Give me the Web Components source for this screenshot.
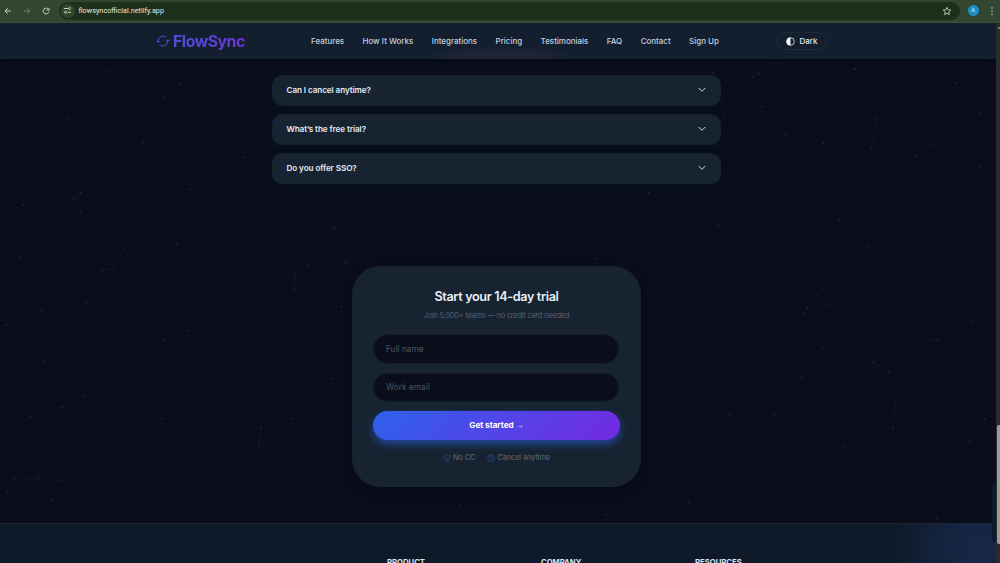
<!DOCTYPE html>
<html lang="en">
<head>
<meta charset="utf-8">
<title>FlowSync</title>
<style>
  html, body {
    margin: 0;
    height: 100%;
    overflow: hidden;
    background: #0a0e1b;
    font-family: Inter, "Liberation Sans", sans-serif;
    color: #e5ebf5;
  }
</style>
</head>
<body>
<browser-window>
  <browser-bar slot="bar" url="flowsyncofficial.netlify.app" initial="A"></browser-bar>
  <site-header>
    <nav-link>Features</nav-link>
    <nav-link>How It Works</nav-link>
    <nav-link>Integrations</nav-link>
    <nav-link>Pricing</nav-link>
    <nav-link>Testimonials</nav-link>
    <nav-link>FAQ</nav-link>
    <nav-link>Contact</nav-link>
    <nav-link>Sign Up</nav-link>
    <theme-toggle slot="toggle">Dark</theme-toggle>
  </site-header>
  <page-main>
    <faq-list>
      <faq-item>Can I cancel anytime?</faq-item>
      <faq-item>What’s the free trial?</faq-item>
      <faq-item>Do you offer SSO?</faq-item>
    </faq-list>
    <trial-card></trial-card>
  </page-main>
  <site-footer>
    <span>PRODUCT</span>
    <span>COMPANY</span>
    <span>RESOURCES</span>
  </site-footer>
</browser-window>

<script>
// small helper so every element is set up the same way
function define(name, html, setup) {
  const template = document.createElement("template");
  template.innerHTML = html;
  class Component extends HTMLElement {
    constructor() {
      super();
      this.attachShadow({ mode: "open" });
      this.shadowRoot.appendChild(template.content.cloneNode(true));
      if (setup) setup(this, this.shadowRoot);
    }
  }
  window.customElements.define(name, Component);
}

define("browser-window", `
  <style>
    :host { display: flex; flex-direction: column; width: 100%; height: 100vh; overflow: hidden; }
    .view { flex: 1; min-height: 0; display: flex; }
    .page { flex: 1; min-width: 0; display: flex; flex-direction: column; position: relative; overflow: hidden; }
    .track { width: 4px; background: #2a2a2b; display: flex; flex-direction: column; align-items: flex-end; box-sizing: border-box; padding-top: 3px; }
    .arrow { width: 0; height: 0; border: 1.5px solid transparent; border-bottom: 3px solid #999; border-top: 0; }
    .thumb { width: 3px; height: 119px; margin-top: 396px; background: #9b9b9d; border-radius: 2px 0 0 2px; }
    .chat { position: absolute; right: 0; top: 461px; width: 4px; height: 58px; background: #0b1d30; border-radius: 3px 0 0 3px; }
  </style>
  <slot name="bar"></slot>
  <div class="view">
    <div class="page"><slot></slot><div class="chat"></div></div>
    <div class="track"><div class="arrow"></div><div class="thumb"></div></div>
  </div>
`);

define("browser-bar", `
  <style>
    :host {
      display: flex; align-items: center; height: 23px; box-sizing: border-box;
      background: #324630; border-bottom: 1px solid #3c4f3c; color: #c4cfc0;
      padding: 0 6px 1px 2.5px;
    }
    svg { display: block; fill: none; stroke: currentColor; }
    .nav { display: flex; gap: 9px; width: 56px; }
    .nav svg:nth-child(2) { color: #71806e; }
    .pill { flex: 1; height: 18px; border-radius: 9px; background: #1e2f1b; display: flex; align-items: center; box-sizing: border-box; padding: 0 8px 0 2px; }
    .site { width: 14px; height: 14px; border-radius: 50%; background: #33472f; display: grid; place-items: center; }
    .url { flex: 1; margin-left: 4px; font: 400 7.25px Roboto, sans-serif; color: #e4eae1; }
    .avatar { width: 11px; height: 11px; border-radius: 50%; background: #1c8ec4; color: #e5f3fb; font: 5.5px/11px Roboto, sans-serif; text-align: center; margin: 0 11.5px 0 8px; }
    .star { margin-left: auto; }
  </style>
  <div class="nav">
    <svg width="10" height="10" viewBox="0 0 10 10" stroke-width="1"><path d="M8 5H2M4.8 2.2 2 5l2.800 2.800"/></svg>
    <svg width="10" height="10" viewBox="0 0 10 10" stroke-width="1"><path d="M2 5h6M5.200 2.200 8 5 5.200 7.800"/></svg>
    <svg width="10" height="10" viewBox="0 0 10 10" stroke-width="1"><path d="M7.500 3.500A2.900 2.900 0 1 0 7.900 5.500M8 1.800V4H5.600"/></svg>
  </div>
  <div class="pill">
    <div class="site"><svg width="9" height="9" viewBox="0 0 9 9" stroke-width="1"><path d="M5 2.500H1M4.500 6.300H8"/><circle cx="6.500" cy="2.500" r="1"/><circle cx="2.500" cy="6.300" r="1"/></svg></div>
    <div class="url"></div>
    <svg class="star" width="10" height="10" viewBox="0 0 10 10" stroke-width=".9"><path d="M5 1.300 6.100 3.800 8.800 4.100 6.800 5.900 7.400 8.600 5 7.200 2.600 8.600 3.200 5.900 1.200 4.100 3.900 3.800Z"/></svg>
  </div>
  <div class="avatar"></div>
  <svg width="4" height="10" viewBox="0 0 4 10"><g fill="currentColor" stroke="none"><circle cx="2" cy="2" r=".8"/><circle cx="2" cy="5" r=".8"/><circle cx="2" cy="8" r=".8"/></g></svg>
`, (host, root) => {
  root.querySelector(".url").textContent = host.getAttribute("url");
  root.querySelector(".avatar").textContent = host.getAttribute("initial");
});

define("site-header", `
  <style>
    :host {
      display: flex; align-items: center; flex: none; height: 36px; box-sizing: border-box;
      padding: 0 168px 0 156px; position: relative; z-index: 2;
      background: radial-gradient(ellipse 76px 9px at 498px 33px, #1e2536 0 55%, transparent), #131f2f;
      box-shadow: 0 1px 5px #060913;
    }
    .brand { display: flex; align-items: center; gap: 3px; width: 155px; }
    .name { font-size: 15.8px; font-weight: 700; letter-spacing: -.45px; line-height: 20px; padding-top: 1px; background: linear-gradient(100deg, #4652dd, #7033d6); -webkit-background-clip: text; color: transparent; }
    nav { display: flex; gap: 18.4px; flex: 1; }
  </style>
  <div class="brand">
    <svg width="14" height="14" viewBox="0 0 14 14" fill="none" stroke="#4355cf" stroke-width="1"><path d="M2.200 6.500A5 5 0 0 1 10.500 3.300M11.800 7.500A5 5 0 0 1 3.500 10.700"/><path d="M.3 8.200h3.800L2.200 5.700ZM9.900 5.800h3.800L11.800 8.300Z" fill="#4355cf" stroke="none"/></svg>
    <span class="name">FlowSync</span>
  </div>
  <nav><slot></slot></nav>
  <slot name="toggle"></slot>
`);

define("nav-link", `
  <style>
    :host { display: block; font-size: 7.97px; line-height: 12px; font-weight: 500; color: #c4cfdf; white-space: nowrap; }
  </style>
  <slot></slot>
`);

define("theme-toggle", `
  <style>
    :host { display: flex; align-items: center; justify-content: center; gap: 4px; width: 52px; height: 18.500px; box-sizing: border-box; border: 1px solid #1d2a3a; border-radius: 10px; background: #141f2e; font-size: 8px; font-weight: 500; color: #e3eaf4; }
  </style>
  <svg width="9" height="9" viewBox="0 0 9 9"><circle cx="4.500" cy="4.500" r="3.800" fill="none" stroke="#e3eaf4" stroke-width=".8"/><path d="M4.500.500a4 4 0 0 0 0 8Z" fill="#f2f6fc"/></svg>
  <slot></slot>
`);

define("page-main", `
  <style>
    :host { display: flex; flex-direction: column; align-items: center; flex: none; height: 464px; box-sizing: border-box; padding: 15.500px 3px 0 0; position: relative; gap: 82px; background: #0a0e1b; }
    .sky { position: absolute; inset: 0; width: 996px; height: 464px; }
    ::slotted(*) { position: relative; }
  </style>
  <svg class="sky" viewBox="0 59 996 464"></svg>
  <slot></slot>
`, (host, root) => {
  const stars = [
    [110,72],[180,83],[163,97],[69,118],[91,136],[143,142],[232,129],[245,157],[190,189],[81,193],[74,198],[81,213],[23,205],
    [193,232],[177,244],[20,257],[125,248],[112,269],[102,271],[144,279],[86,302],[42,310],[6,325],[187,331],[163,340],[45,361],
    [334,228],[309,265],[295,274],[294,290],[346,263],[341,307],[333,379],[254,392],[83,396],[62,407],[30,417],[112,420],[162,419],
    [213,416],[293,419],[261,428],[259,445],[14,478],[38,477],[64,481],[7,493],[52,500],[111,488],[160,501],
    [713,73],[752,77],[759,74],[776,63],[855,69],[956,83],[762,107],[723,118],[877,118],[980,114],[786,135],[823,143],[871,149],
    [932,144],[916,156],[960,167],[981,167],[740,184],[718,226],[729,224],[839,220],[869,246],[824,288],[832,305],[807,308],
    [804,313],[823,347],[802,378],[973,322],[938,340],[928,341],[873,362],[889,372],[856,391],[896,402],[893,428],[985,419],
    [970,442],[843,446],[730,414],[774,414],[880,470],[937,518],[460,506],[606,515],[689,502],[755,504],[649,193],[597,259]
  ];
  const lines = [
    [180,83,163,97],[74,198,81,193],[74,198,81,213],[102,271,112,269],[125,248,112,269],[6,325,42,310],[334,228,309,265],[309,265,295,274],
    [295,274,294,290],[334,228,346,263],[30,417,62,407],[62,407,83,396],[261,428,259,445],[14,478,64,481],[7,493,14,478],
    [752,77,776,63],[877,118,871,149],[932,144,916,156],[824,288,804,313],[807,308,832,305],[823,347,802,378],[928,341,938,340],[873,362,889,372],[893,428,896,402]
  ];
  root.querySelector(".sky").innerHTML =
    lines.map(l => `<path d="M${l[0]} ${l[1]}L${l[2]} ${l[3]}" stroke="#101627" stroke-width=".8"/>`).join("") +
    stars.map(s => `<circle cx="${s[0]}" cy="${s[1]}" r="1.3" fill="#171d2e"/>`).join("");
});

define("faq-list", `
  <style>
    :host { display: flex; flex-direction: column; gap: 7.500px; width: 449px; }
  </style>
  <slot></slot>
`);

define("faq-item", `
  <style>
    :host { display: flex; align-items: center; justify-content: space-between; height: 31.500px; box-sizing: border-box; padding: 0 14.5px 0 13.5px; border: 1px solid #14212f; border-radius: 10px; background: #172330; box-shadow: 0 2px 6px #07101e; font-size: 8.15px; letter-spacing: -.08px; font-weight: 600; color: #e5ebf5; }
  </style>
  <span><slot></slot></span>
  <svg width="8" height="8" viewBox="0 0 8 8" fill="none" stroke="#cdd8e8" stroke-width="1" stroke-linecap="round" stroke-linejoin="round"><path d="M1 2.300 4 5.300 7 2.300"/></svg>
`);

define("trial-card", `
  <style>
    :host { display: flex; flex-direction: column; align-items: stretch; width: 289px; height: 221px; box-sizing: border-box; padding: 21px 20px 0; border: 1px solid #152230; border-radius: 28px; background: #172330; box-shadow: 0 4px 12px #070b16; text-align: center; }
    h2 { margin: 0; font-size: 12.6px; letter-spacing: -.34px; line-height: 18px; font-weight: 600; color: #e9eff8; }
    p { margin: 4px 0 0; font-size: 7.4px; letter-spacing: -.2px; line-height: 12px; color: #57616f; }
    form { display: flex; flex-direction: column; gap: 9px; margin-top: 12px; }
    input { appearance: none; height: 29.500px; box-sizing: border-box; margin: 0 1px 0 0; border: 1px solid #111b2a; border-radius: 15px; background: #090e1a; padding: 0 12px; outline: none; font: 8.300px Inter, sans-serif; color: #e5ebf5; }
    input::placeholder { color: #4b5361; opacity: 1; }
    button { height: 29px; border: 0; border-radius: 15px; background: linear-gradient(135deg, #2d62ec, #7529e1); box-shadow: 0 4px 9px #2555c8c0; font: 700 8.200px Inter, sans-serif; letter-spacing: -.05px; color: #fff; padding: 0 0 2px; }
    button span { font-family: "Liberation Sans", sans-serif; font-weight: 400; }
    .perks { display: flex; justify-content: center; gap: 12px; margin-top: 12px; font-size: 7.400px; letter-spacing: -.1px; line-height: 12px; color: #616b79; }
    .perks span { display: flex; align-items: center; gap: 2px; }
    svg { fill: none; stroke: #224b8e; stroke-width: .8; }
  </style>
  <h2>Start your 14-day trial</h2>
  <p>Join 5,000+ teams — no credit card needed</p>
  <form>
    <input type="text" placeholder="Full name">
    <input type="email" placeholder="Work email">
    <button type="button">Get started <span>→</span></button>
  </form>
  <div class="perks">
    <span><svg width="8" height="8" viewBox="0 0 8 8"><path d="M4 .6Q5.500 1.400 7 1.500 7.300 5.700 4 7.400.700 5.700 1 1.500 2.500 1.400 4 .6ZM2.600 3.900 3.700 5 5.500 3"/></svg>No CC</span>
    <span><svg width="8" height="8" viewBox="0 0 8 8"><circle cx="4" cy="4" r="3.300"/><path d="M4 1.800V4L5.500 5"/></svg>Cancel anytime</span>
  </div>
`);

define("site-footer", `
  <style>
    :host {
      display: grid; grid-template-columns: 154px 154px 154px; align-items: start; flex: none; height: 60px; box-sizing: border-box;
      border-top: 1px solid #1b2333; padding: 33px 0 0 387px;
      background: radial-gradient(circle at 979px 24px, #17274a 0, #15243f 35px, transparent 88px), #0e1a29;
      font-size: 7.700px; line-height: 11px; font-weight: 700; color: #dfe6f0;
    }
  </style>
  <slot></slot>
`);
</script>
</body>
</html>
